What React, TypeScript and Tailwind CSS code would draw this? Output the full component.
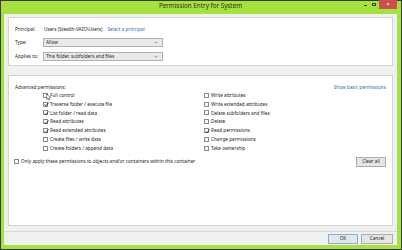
import React from "react";

const leftPerms = [
  { label: "Full control", on: false },
  { label: "Traverse folder / execute file", on: true },
  { label: "List folder / read data", on: true },
  { label: "Read attributes", on: true },
  { label: "Read extended attributes", on: true },
  { label: "Create files / write data", on: false },
  { label: "Create folders / append data", on: false },
];

const rightPerms = [
  { label: "Write attributes", on: false },
  { label: "Write extended attributes", on: false },
  { label: "Delete subfolders and files", on: false },
  { label: "Delete", on: false },
  { label: "Read permissions", on: true },
  { label: "Change permissions", on: false },
  { label: "Take ownership", on: false },
];

const Check = ({ on }: { on: boolean }) => (
  <div className="w-[5px] h-[5px] shrink-0 border-[0.6px] border-[#8a8a8a] bg-white relative">
    {on && (
      <svg viewBox="0 0 10 10" className="absolute left-0 -top-[0.5px] w-[5px] h-[5px] overflow-visible">
        <path d="M1.2 5 L3.8 7.8 L9 1" fill="none" stroke="#1a1a1a" strokeWidth="1.7" />
      </svg>
    )}
  </div>
);

const PermRow = ({ label, on }: { label: string; on: boolean }) => (
  <div className="h-[8.8px] flex items-center gap-[2px]">
    <Check on={on} />
    <span className="leading-none">{label}</span>
  </div>
);

const Dropdown = ({ value }: { value: string }) => (
  <div className="w-[120px] h-[9px] border-[0.6px] border-[#b0b0b0] bg-[#e9e9e9] flex items-center justify-between px-[2px]">
    <span className="leading-none">{value}</span>
    <svg viewBox="0 0 8 5" className="w-[4px] h-[3px] mr-[2px]">
      <path d="M1 1 L4 4 L7 1" fill="none" stroke="#555" strokeWidth="1.2" />
    </svg>
  </div>
);

const Btn = ({ label, wide, blue }: { label: string; wide?: boolean; blue?: boolean }) => (
  <div
    className={`${wide ? "w-[32px]" : "w-[30px]"} h-[10px] flex items-center justify-center bg-[#e5e5e5] border-[0.6px] ${
      blue ? "border-[#7fb0e0]" : "border-[#adadad]"
    }`}
  >
    <span className="leading-none">{label}</span>
  </div>
);

export default function App() {
  return (
    <div
      className="w-[402px] h-[250px] bg-[#a6e23e] flex flex-col border-[#a6e23e] border-t-[14px] border-l-[4px] border-r-[5px] border-b-[5px] outline-1 outline-[#3a3a3a] -outline-offset-1 text-[#1e1e1e] text-[4.7px]"
      style={{ fontFamily: '"Noto Sans", "Open Sans", sans-serif' }}
    >
      {/* title bar sits in the top frame */}
      <div className="-mt-[14px] h-[14px] shrink-0 relative flex items-center justify-center">
        <svg viewBox="0 0 6 8" className="absolute -left-[2px] top-[2px] w-[4px] h-[6px]">
          <path d="M1 7 L3 1 L5 7 Z" fill="#d8b93a" />
        </svg>
        <span className="text-[6.3px] text-[#2b2b2b] leading-none -mt-[1px]">Permission Entry for System</span>
        <div className="absolute right-0 top-0 flex items-start">
          <div className="w-[8px] h-[8px] flex items-center justify-center">
            <div className="w-[3px] h-0 border-t border-[#3a3a3a] mt-[2px]" />
          </div>
          <div className="w-[10px] h-[8px] flex items-center justify-center">
            <div className="w-[4px] h-[3px] border-[0.8px] border-[#3a3a3a] border-t-[1.3px]" />
          </div>
          <div className="relative w-[18px] h-[9px] bg-[#c9514e] border-[#c9514e] border-y-[4.5px] border-x-[9px]">
            <span className="absolute -left-[9px] -top-[4.5px] w-[18px] h-[9px] flex items-center justify-center text-white text-[5px] leading-none font-bold">
              ×
            </span>
          </div>
        </div>
      </div>

      {/* client area */}
      <div className="flex-1 bg-[#f0f0f0] flex flex-col">
        <div className="mt-[3px] mx-[4px] bg-white border-[0.6px] border-[#d4d4d4] pt-[7px] px-[6px] pb-[4px] flex flex-col">
          <div className="h-[8px] flex items-center">
            <span className="w-[29px] leading-none">Principal:</span>
            <span className="leading-none">Users (Stealth-VAIO\Users)</span>
            <span className="ml-[5px] leading-none text-[#2f6fb5]">Select a principal</span>
          </div>
          <div className="mt-[5px] flex items-center">
            <span className="w-[28px] leading-none">Type:</span>
            <Dropdown value="Allow" />
          </div>
          <div className="mt-[5px] flex items-center">
            <span className="w-[28px] leading-none">Applies to:</span>
            <Dropdown value="This folder, subfolders and files" />
          </div>
        </div>

        <div className="mt-[9px] mx-[4px] h-[151px] bg-white border-[0.6px] border-[#d4d4d4] pt-[7px] px-[6px] flex flex-col">
          <div className="h-[8px] flex items-center justify-between">
            <span className="leading-none">Advanced permissions:</span>
            <span className="leading-none text-[#2f6fb5]">Show basic permissions</span>
          </div>
          <div className="flex pl-[28px] relative">
            <div className="w-[161px] flex flex-col">
              {leftPerms.map((p) => (
                <PermRow key={p.label} {...p} />
              ))}
            </div>
            <div className="flex flex-col">
              {rightPerms.map((p) => (
                <PermRow key={p.label} {...p} />
              ))}
            </div>
            {/* mouse pointer over Full control */}
            <svg viewBox="0 0 8 12" className="absolute left-[31px] top-[2px] w-[5px] h-[8px]">
              <path d="M1 1 L1 10 L3.2 8 L4.8 11.2 L6 10.6 L4.5 7.5 L7.2 7.3 Z" fill="#fff" stroke="#222" strokeWidth="0.8" />
            </svg>
          </div>
          <div className="mt-[4px] flex items-center justify-between">
            <div className="flex items-center gap-[2px] -ml-[1px]">
              <Check on={false} />
              <span className="leading-none">
                Only apply these permissions to objects and/or containers within this container
              </span>
            </div>
            <Btn label="Clear all" />
          </div>
        </div>

        <div className="mt-[5px] h-0 border-t border-[#d8d8d8]" />

        <div className="flex-1 flex items-center justify-end gap-[3px] pr-[4px]">
          <Btn label="OK" blue />
          <Btn label="Cancel" wide />
        </div>
      </div>
    </div>
  );
}
